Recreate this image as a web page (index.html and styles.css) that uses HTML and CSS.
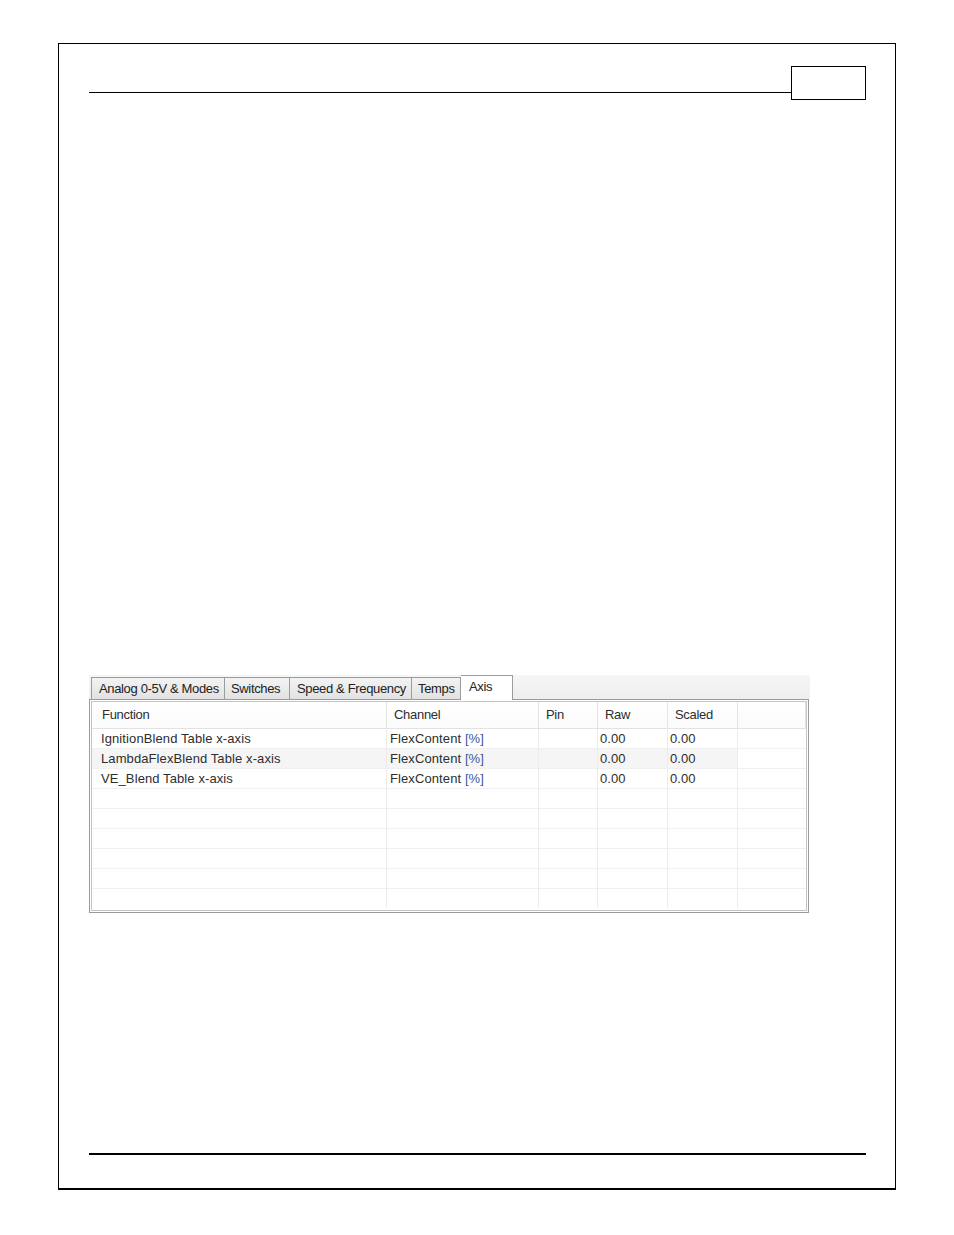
FILE: index.html
```html
<!DOCTYPE html>
<html>
<head>
<meta charset="utf-8">
<link rel="stylesheet" href="styles.css">
</head>
<body>
<div class="frame">
  <div class="header">
    <div class="rule"></div>
    <div class="pagebox"></div>
  </div>
  <div class="shot">
    <div class="tabs">
      <div class="tab t1">Analog 0-5V &amp; Modes</div>
      <div class="tab t2">Switches</div>
      <div class="tab t3">Speed &amp; Frequency</div>
      <div class="tab t4">Temps</div>
      <div class="tab sel">Axis</div>
    </div>
    <div class="list">
      <div class="inner">
        <div class="row head">
          <div class="c c1">Function</div>
          <div class="c c2">Channel</div>
          <div class="c c3">Pin</div>
          <div class="c c4">Raw</div>
          <div class="c c5">Scaled</div>
          <div class="c c6"></div>
        </div>
        <div class="row">
          <div class="c c1">IgnitionBlend Table x-axis</div>
          <div class="c c2">FlexContent <span class="u">[%]</span></div>
          <div class="c c3"></div>
          <div class="c c4">0.00</div>
          <div class="c c5">0.00</div>
          <div class="c c6"></div>
        </div>
        <div class="row alt">
          <div class="c c1">LambdaFlexBlend Table x-axis</div>
          <div class="c c2">FlexContent <span class="u">[%]</span></div>
          <div class="c c3"></div>
          <div class="c c4">0.00</div>
          <div class="c c5">0.00</div>
          <div class="c c6"></div>
        </div>
        <div class="row">
          <div class="c c1">VE_Blend Table x-axis</div>
          <div class="c c2">FlexContent <span class="u">[%]</span></div>
          <div class="c c3"></div>
          <div class="c c4">0.00</div>
          <div class="c c5">0.00</div>
          <div class="c c6"></div>
        </div>
        <div class="row"><div class="c c1"></div><div class="c c2"></div><div class="c c3"></div><div class="c c4"></div><div class="c c5"></div><div class="c c6"></div></div>
        <div class="row"><div class="c c1"></div><div class="c c2"></div><div class="c c3"></div><div class="c c4"></div><div class="c c5"></div><div class="c c6"></div></div>
        <div class="row"><div class="c c1"></div><div class="c c2"></div><div class="c c3"></div><div class="c c4"></div><div class="c c5"></div><div class="c c6"></div></div>
        <div class="row"><div class="c c1"></div><div class="c c2"></div><div class="c c3"></div><div class="c c4"></div><div class="c c5"></div><div class="c c6"></div></div>
        <div class="row"><div class="c c1"></div><div class="c c2"></div><div class="c c3"></div><div class="c c4"></div><div class="c c5"></div><div class="c c6"></div></div>
        <div class="row last"><div class="c c1"></div><div class="c c2"></div><div class="c c3"></div><div class="c c4"></div><div class="c c5"></div><div class="c c6"></div></div>
      </div>
    </div>
  </div>
  <div class="footer"></div>
</div>
</body>
</html>
```

FILE: styles.css
```css
html, body {
  margin: 0;
  padding: 0;
  background: #ffffff;
}
body {
  font-family: "Liberation Sans", Arial, sans-serif;
}
.frame {
  box-sizing: border-box;
  margin: 43px 0 0 58px;
  width: 838px;
  height: 1147px;
  border-top: 1px solid #000;
  border-left: 1px solid #000;
  border-right: 1px solid #000;
  border-bottom: 2px solid #000;
  display: flex;
  flex-direction: column;
  padding-left: 30px;
}
.header {
  display: flex;
  margin-top: 22px;
  width: 777px;
}
.rule {
  flex: 1;
  height: 26px;
  border-bottom: 1px solid #000;
}
.pagebox {
  box-sizing: border-box;
  width: 75px;
  height: 34px;
  border: 1px solid #000;
}
.shot {
  margin-top: 575px;
  width: 721px;
  font-size: 13px;
  color: #2e2e2e;
}
.tabs {
  display: flex;
  height: 24px;
  align-items: flex-end;
  padding-left: 2px;
  background: linear-gradient(#f6f6f6, #eeeeee);
}
.tab {
  box-sizing: border-box;
  height: 22px;
  line-height: 22px;
  border: 1px solid #9c9c9c;
  border-bottom: none;
  border-right: none;
  background: linear-gradient(#f3f3f3, #e2e2e2);
  padding-left: 7px;
  color: #222;
  letter-spacing: -0.35px;
}
.t1 { width: 133px; }
.t2 { width: 65px; padding-left: 6px; }
.t3 { width: 122px; }
.t4 { width: 50px; padding-left: 6px; border-right: 1px solid #9c9c9c; }
.sel {
  width: 52px;
  height: 25px;
  line-height: 21px;
  background: #ffffff;
  border: 1px solid #9c9c9c;
  border-bottom: none;
  border-left: none;
  padding-left: 8px;
  margin-bottom: -1px;
  position: relative;
}
.list {
  box-sizing: border-box;
  width: 720px;
  border: 1px solid #9a9a9a;
  padding: 1px;
  background: #ffffff;
}
.inner {
  border: 1px solid #c4c4c4;
  height: 208px;
  overflow: hidden;
}
.row {
  display: flex;
  height: 19px;
  border-bottom: 1px solid #f0f0f0;
}
.row.head {
  height: 26px;
  border-bottom: 1px solid #e2e2e2;
  background: linear-gradient(#ffffff, #fbfbfb);
}
.row.last { border-bottom: none; }
.c {
  box-sizing: border-box;
  height: 100%;
  line-height: 20px;
  border-right: 1px solid #ececec;
  white-space: nowrap;
  overflow: hidden;
  letter-spacing: 0.1px;
}
.head .c {
  line-height: 25px;
  border-right: 1px solid #e4e4e4;
  padding-left: 10px;
  letter-spacing: -0.3px;
}
.c1 { width: 295px; padding-left: 9px; }
.c2 { width: 152px; padding-left: 3px; }
.c3 { width: 59px; }
.c4 { width: 70px; padding-left: 2px; }
.c5 { width: 70px; padding-left: 2px; }
.c6 { flex: 1; border-right: none; }
.head .c2 { padding-left: 7px; }
.head .c3 { padding-left: 7px; }
.head .c4 { padding-left: 7px; }
.head .c5 { padding-left: 7px; }
.alt .c1, .alt .c2, .alt .c3, .alt .c4, .alt .c5 {
  background: #f5f5f5;
}
.u { color: #3a5a9a; }
.footer {
  margin-top: auto;
  margin-bottom: 33px;
  width: 777px;
  height: 2px;
  background: #000;
}
```
